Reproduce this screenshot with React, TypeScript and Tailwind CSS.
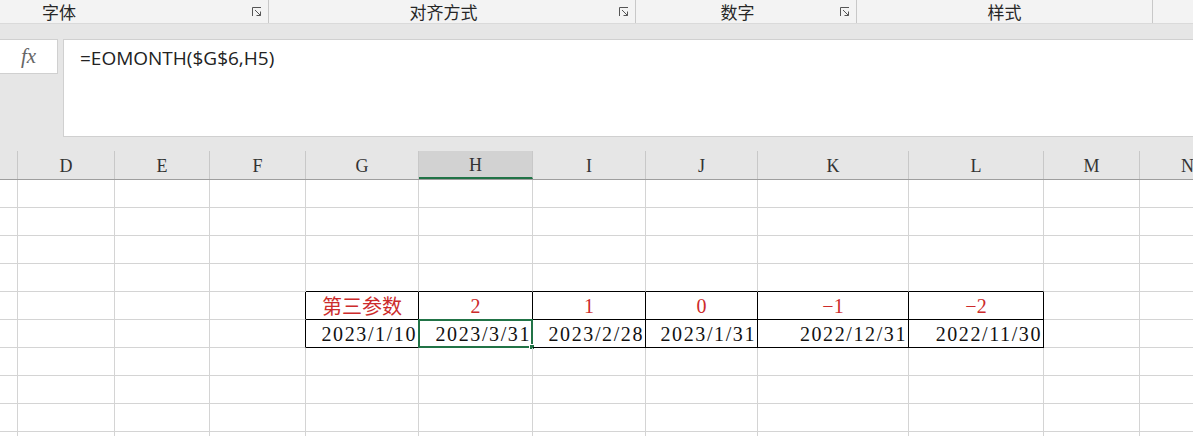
import React from 'react';

const cols = [
  { k: '', w: 18 },
  { k: 'D', w: 97 },
  { k: 'E', w: 95 },
  { k: 'F', w: 96 },
  { k: 'G', w: 113 },
  { k: 'H', w: 114 },
  { k: 'I', w: 113 },
  { k: 'J', w: 112 },
  { k: 'K', w: 151 },
  { k: 'L', w: 135 },
  { k: 'M', w: 96 },
  { k: 'N', w: 96 },
];

const row5: Record<string, string> = { G: '第三参数', H: '2', I: '1', J: '0', K: '−1', L: '−2' };
const row6: Record<string, string> = {
  G: '2023/1/10',
  H: '2023/3/31',
  I: '2023/2/28',
  J: '2023/1/31',
  K: '2022/12/31',
  L: '2022/11/30',
};

const tableCols = ['G', 'H', 'I', 'J', 'K', 'L'];
const cjk = "font-['Noto_Sans_CJK_SC',sans-serif]";
const serif = "font-['Liberation_Serif','Noto_Sans_CJK_SC',serif]";

function Launcher() {
  return (
    <svg width="11" height="11" viewBox="0 0 11 11" className="text-[#555]">
      <path d="M1.5 10V1.5H10" fill="none" stroke="currentColor" strokeWidth="1" />
      <path d="M4 4l5.5 5.5" fill="none" stroke="currentColor" strokeWidth="1" />
      <path d="M5.5 9.5h4v-4" fill="none" stroke="currentColor" strokeWidth="1" />
    </svg>
  );
}

function RibbonGroup({ label, width, launcher = true, first = false }: { label: string; width: number; launcher?: boolean; first?: boolean }) {
  return (
    <div className="flex items-center h-full border-r border-[#c8c8c8] shrink-0" style={{ width }}>
      <div className={`flex-1 flex ${first ? 'justify-start pl-[42px]' : 'justify-center'}`}>
        <span className={`${cjk} text-[17px] leading-none text-[#262626]`}>{label}</span>
      </div>
      {launcher && (
        <div className="pr-[6px] flex items-center">
          <Launcher />
        </div>
      )}
    </div>
  );
}

function Cell({ r, c, w }: { r: number; c: string; w: number }) {
  const idx = tableCols.indexOf(c);
  const inTable = idx >= 0 && (r === 5 || r === 6);
  const rightBlack = (r === 5 || r === 6) && (idx >= 0 || c === 'F');
  const bottomBlack = idx >= 0 && r >= 4 && r <= 6;
  const selected = r === 6 && c === 'H';
  let content: React.ReactNode = null;
  if (inTable && r === 5) {
    content = (
      <div className={`w-full text-center text-[#cc2b2b] ${c === 'G' ? `${cjk} text-[20px]` : `${serif} text-[20px]`} leading-none`}>
        {row5[c]}
      </div>
    );
  } else if (inTable && r === 6) {
    content = (
      <div className={`w-full text-right pr-[1px] text-[#111] ${serif} text-[20px] tracking-[1.6px] leading-none`}>
        {row6[c]}
      </div>
    );
  }
  return (
    <div
      className={`relative shrink-0 h-[28px] flex items-center border-r border-b ${rightBlack ? 'border-r-black' : 'border-r-[#d4d4d4]'} ${bottomBlack ? 'border-b-black' : 'border-b-[#d4d4d4]'}`}
      style={{ width: w }}
    >
      {content}
      {selected && (
        <div className="absolute -left-[1px] -top-[1px] -right-[1px] -bottom-[1px] border-2 border-[#217346]">
          <div className="absolute -right-[4px] -bottom-[4px] w-[6px] h-[6px] bg-[#217346] border border-white" />
        </div>
      )}
    </div>
  );
}

export default function App() {
  const rows = [1, 2, 3, 4, 5, 6, 7, 8, 9, 10];
  return (
    <div className="w-[1193px] h-[436px] overflow-hidden bg-white flex flex-col">
      {/* ribbon group labels */}
      <div className="h-[24px] bg-[#f3f3f3] border-b border-[#dadada] flex shrink-0">
        <RibbonGroup label="字体" width={269} first />
        <RibbonGroup label="对齐方式" width={367} />
        <RibbonGroup label="数字" width={221} />
        <RibbonGroup label="样式" width={296} launcher={false} />
      </div>

      {/* formula bar */}
      <div className="bg-[#e6e6e6] pt-[15px] pb-[14px] shrink-0 flex gap-[5px]">
        <div className="w-[58px] h-[35px] bg-white border border-l-0 border-[#d0d0d0] flex items-center justify-center">
          <span className="font-['Liberation_Serif',serif] italic text-[21px] text-[#666]">fx</span>
        </div>
        <div className="flex-1 h-[98px] bg-white border border-r-0 border-[#d0d0d0] pl-[16px] pt-[4px]">
          <span className="font-['Open_Sans',sans-serif] text-[19px] text-[#222]">=EOMONTH($G$6,H5)</span>
        </div>
      </div>

      {/* column headers */}
      <div className="h-[29px] bg-[#e6e6e6] border-b border-[#9e9e9e] flex shrink-0">
        {cols.map((c) => (
          <div
            key={c.k || 'c'}
            className={`shrink-0 h-full flex items-center justify-center pt-[3px] border-r border-[#c8c8c8] ${serif} text-[18px] text-[#333] ${c.k === 'H' ? 'bg-[#d2d2d2] border-b-2 border-b-[#217346]' : ''}`}
            style={{ width: c.w }}
          >
            {c.k}
          </div>
        ))}
      </div>

      {/* grid */}
      <div className="flex flex-col">
        {rows.map((r) => (
          <div key={r} className="flex">
            {cols.map((c) => (
              <Cell key={c.k || 'c'} r={r} c={c.k} w={c.w} />
            ))}
          </div>
        ))}
      </div>
    </div>
  );
}
